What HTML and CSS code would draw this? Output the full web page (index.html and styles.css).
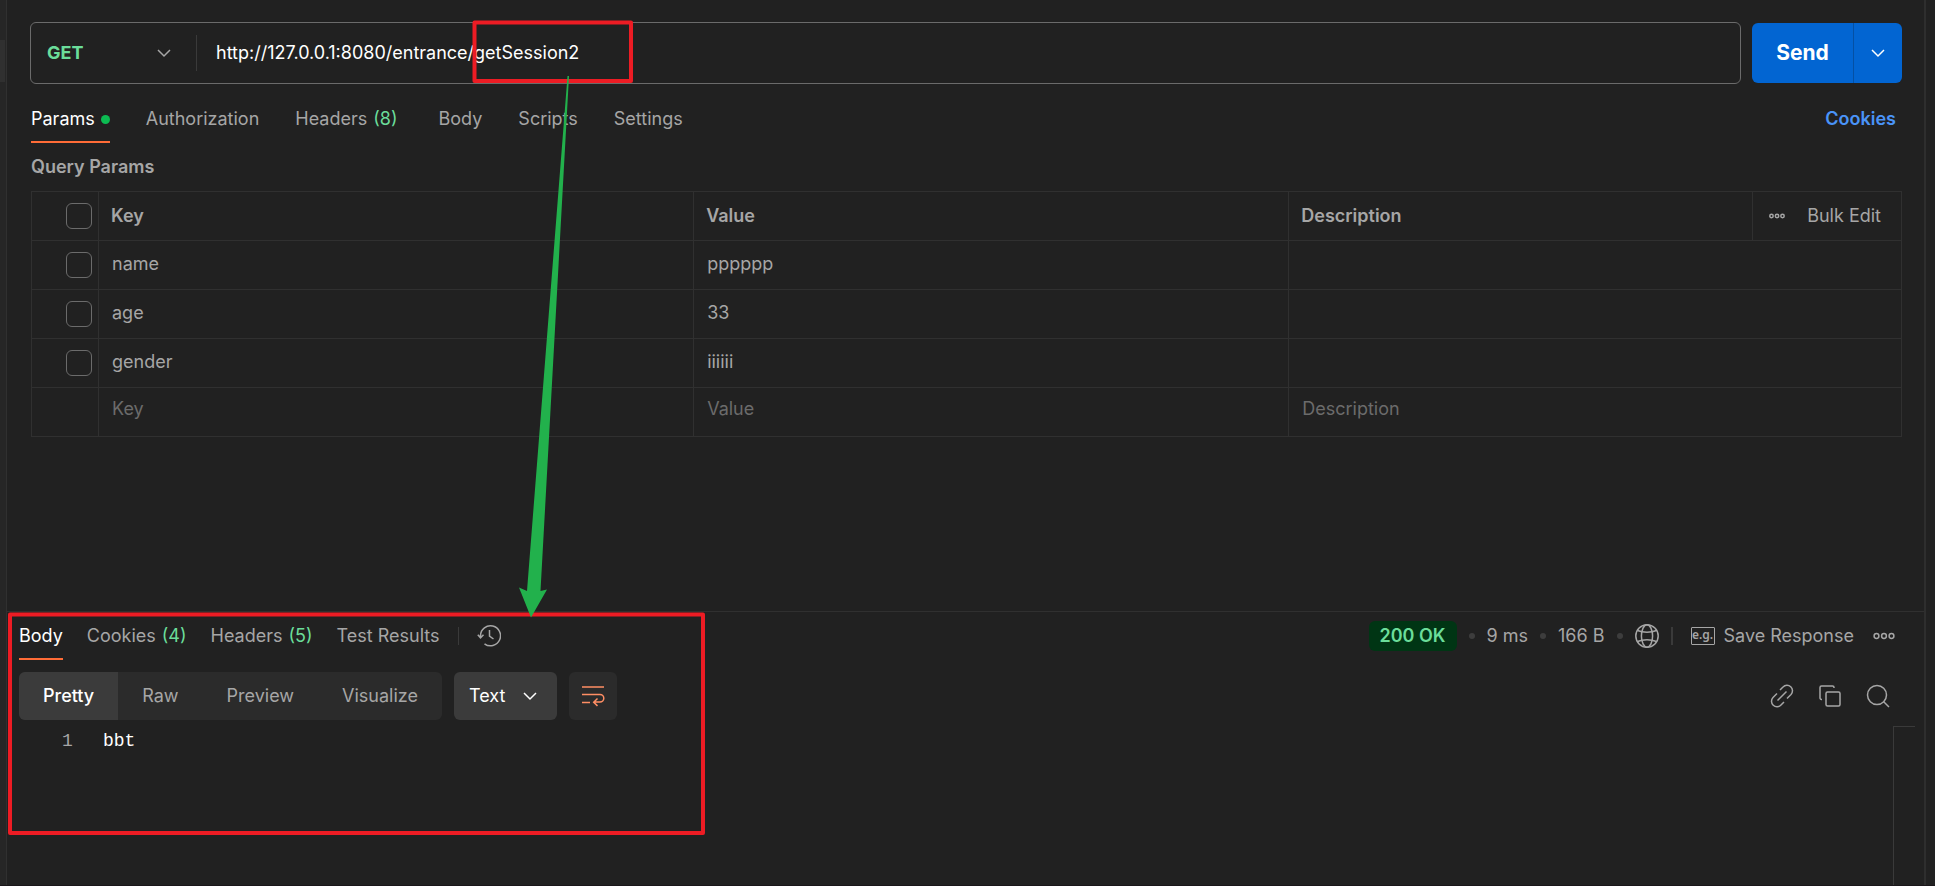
FILE: index.html
```html
<!DOCTYPE html>
<html lang="en">
<head>
<meta charset="utf-8">
<title>GET getSession2</title>
<link rel="stylesheet" href="styles.css">
</head>
<body>
<div class="app">
  <aside class="rail"><span class="rail-item"></span></aside>
  <main class="main">
    <section class="request">
      <form class="url-row">
        <div class="url-box">
          <button type="button" class="method">GET
            <svg width="14" height="9" viewBox="0 0 14 9"><path d="M1 1l6 6 6-6"/></svg>
          </button>
          <input class="url" type="text" aria-label="Request URL" value="http://127.0.0.1:8080/entrance/getSession2">
        </div>
        <div class="send-group">
          <button type="button" class="send">Send</button>
          <button type="button" class="send-more" aria-label="Send options">
            <svg width="14" height="9" viewBox="0 0 14 9"><path d="M1 1l6 6 6-6"/></svg>
          </button>
        </div>
      </form>
      <nav class="tabs">
        <a href="#params" class="tab active">Params<i class="live"></i></a>
        <a href="#auth" class="tab">Authorization</a>
        <a href="#headers" class="tab headers">Headers <span class="count">(8)</span></a>
        <a href="#body" class="tab">Body</a>
        <a href="#scripts" class="tab">Scripts</a>
        <a href="#settings" class="tab">Settings</a>
        <a href="#cookies" class="cookies">Cookies</a>
      </nav>
      <h2 class="title">Query Params</h2>
      <table class="params">
        <colgroup><col class="c-check"><col class="c-key"><col class="c-value"><col class="c-desc"><col class="c-tools"></colgroup>
        <thead>
          <tr>
            <th class="check"><input type="checkbox" aria-label="Select all"></th>
            <th>Key</th><th>Value</th><th>Description</th>
            <th class="tools"><div class="tools-row">
              <button type="button" class="icon" aria-label="More options"><svg width="16" height="6" viewBox="0 0 16 6"><circle cx="2.5" cy="3" r="1.7"/><circle cx="8" cy="3" r="1.7"/><circle cx="13.5" cy="3" r="1.7"/></svg></button>
              <button type="button" class="bulk">Bulk Edit</button>
            </div></th>
          </tr>
        </thead>
        <tbody>
          <tr><td class="check"><input type="checkbox" aria-label="name"></td><td>name</td><td>pppppp</td><td colspan="2"></td></tr>
          <tr><td class="check"><input type="checkbox" aria-label="age"></td><td>age</td><td>33</td><td colspan="2"></td></tr>
          <tr><td class="check"><input type="checkbox" aria-label="gender"></td><td>gender</td><td>iiiiii</td><td colspan="2"></td></tr>
          <tr class="blank"><td class="check"></td>
            <td><input type="text" placeholder="Key" aria-label="Key"></td>
            <td><input type="text" placeholder="Value" aria-label="Value"></td>
            <td colspan="2"><input type="text" placeholder="Description" aria-label="Description"></td></tr>
        </tbody>
      </table>
    </section>
    <section class="response">
      <div class="response-head">
        <nav class="response-tabs">
          <a href="#r-body" class="tab active">Body</a>
          <a href="#r-cookies" class="tab">Cookies <span class="count">(4)</span></a>
          <a href="#r-headers" class="tab">Headers <span class="count">(5)</span></a>
          <a href="#r-tests" class="tab">Test Results</a>
        </nav>
        <button type="button" class="history" aria-label="History">
          <svg width="24" height="22" viewBox="0 0 24 22"><path d="M3.500 13V10.500A10 10 0 1 1 7.500 18.800M.8 9.800l2.700 3 3-3M12.500 5v6.200l4 2.800"/></svg>
        </button>
        <div class="status">
          <span class="code">200 OK</span><i class="dot"></i><span>9 ms</span><i class="dot"></i><span>166 B</span><i class="dot"></i>
          <button type="button" class="globe" aria-label="Network"><svg width="24" height="24" viewBox="0 0 24 24"><circle cx="12" cy="12" r="11.200"/><ellipse cx="12" cy="12" rx="5.600" ry="11.200"/><path d="M2.500 6.500C8 8.800 16 8.800 21.500 6.500M2.500 17.500C8 15.200 16 15.200 21.500 17.500"/></svg></button>
          <button type="button" class="save"><span class="eg">e.g.</span>Save Response</button>
          <button type="button" aria-label="More actions"><svg width="22" height="8" viewBox="0 0 22 8"><circle cx="3.500" cy="4" r="2.400"/><circle cx="11" cy="4" r="2.400"/><circle cx="18.500" cy="4" r="2.400"/></svg></button>
        </div>
      </div>
      <div class="view-bar">
        <div class="segments">
          <button type="button" class="active">Pretty</button><button type="button">Raw</button><button type="button">Preview</button><button type="button">Visualize</button>
        </div>
        <button type="button" class="format">Text
          <svg width="14" height="9" viewBox="0 0 14 9"><path d="M1 1l6 6 6-6"/></svg>
        </button>
        <button type="button" class="wrap" aria-label="Wrap lines">
          <svg width="24" height="22" viewBox="0 0 24 22"><path d="M1 2h22M1 9.500h18a3.800 3.800 0 0 1 0 7.600h-6M1 17.500h8M16.500 13.500l-3.800 3.700 3.800 3.700"/></svg>
        </button>
        <div class="view-tools">
          <button type="button" aria-label="Copy link"><svg width="24" height="24" viewBox="0 0 24 24"><path d="M10 6l3-3a5.300 5.300 0 0 1 8 7.500l-4 4M14 18l-3 3a5.300 5.300 0 0 1-8-7.500l4-4M7.500 16.500l9-9"/></svg></button>
          <button type="button" aria-label="Copy"><svg width="24" height="24" viewBox="0 0 24 24"><rect x="8" y="8" width="14" height="14" rx="1.500"/><path d="M4 15.500H3.500A1.500 1.500 0 0 1 2 14V3.500A1.500 1.500 0 0 1 3.500 2H14.500A1.500 1.500 0 0 1 16 3.500V4"/></svg></button>
          <button type="button" aria-label="Search"><svg width="24" height="24" viewBox="0 0 24 24"><circle cx="11" cy="11" r="9.500"/><path d="M17.500 17.500l5.500 5.500"/></svg></button>
        </div>
      </div>
      <div class="editor">
        <pre class="source"><span class="line-no">1</span>bbt</pre>
        <div class="minimap"></div>
      </div>
    </section>
  </main>
  <aside class="gutter"></aside>
</div>
<svg class="markup" width="720" height="850" viewBox="0 0 720 850" aria-hidden="true">
  <rect x="474.500" y="22.500" width="156.500" height="58.500"/>
  <rect x="10" y="614.500" width="693" height="218.500"/>
  <path d="M567.500 76h1.500L540.500 591 547 589.500 531 617.500 519 587.500 527 591Z"/>
</svg>
</body>
</html>
```
FILE: styles.css
```css
* { box-sizing: border-box; }
body {
  margin: 0;
  background: #212121;
  color: #a6a6a6;
  font: 18px/24px Inter, "Liberation Sans", sans-serif;
}
button, input { font: inherit; color: inherit; background: none; border: 0; margin: 0; padding: 0; }
a { color: inherit; text-decoration: none; }
svg { display: block; fill: none; stroke: currentColor; stroke-width: 1.5; }

.app { display: flex; min-height: 100vh; border-bottom: 1px solid #1a161a; }
.rail { width: 7px; padding-top: 40px; background: #262626; border-right: 1px solid #303030; }
.rail-item { display: block; width: 5px; height: 42px; background: #303030; }
.gutter { width: 11px; border-left: 2px solid #2e2e2e; }
.main { flex: 1; min-width: 0; display: flex; flex-direction: column; }

.request { flex: 0 0 611px; padding: 22px 22px 0 24px; }
.url-row { display: flex; align-items: center; gap: 11px; margin-left: -1px; }
.url-box { flex: 1; display: flex; align-items: center; height: 62px; border: 1px solid #6b6b6b; border-radius: 6px; }
.method { display: flex; align-items: center; justify-content: space-between; width: 166px; height: 36px; padding: 0 25px 0 16px; border-right: 1px solid #3a3a3a; color: #6bdd9a; font-weight: 700; }
.method svg { color: #a6a6a6; }
.url { flex: 1; padding-left: 19px; color: #fff; }
.send-group { display: flex; height: 60px; border-radius: 6px; background: #0265d2; color: #fff; overflow: hidden; }
.send { width: 101px; font-size: 21px; font-weight: 700; }
.send-more { width: 49px; border-left: 1px solid #0450a4; display: grid; place-items: center; }

.tabs { display: flex; gap: 36px; padding-top: 19px; }
.tab { display: flex; align-items: center; gap: 6px; height: 40px; padding-bottom: 6px; border-bottom: 2px solid transparent; white-space: nowrap; }
.tab.active { color: #fff; border-color: #ff6c37; }
.tab.headers { padding-right: 5px; }
.tab .count { color: #6bdd9a; }
.live { width: 9px; height: 9px; border-radius: 50%; background: #0cbb52; }
.cookies { margin: 4px 6px 0 auto; color: #4a94f8; font-weight: 600; }

.title { margin: 12px 0; font-size: 18px; font-weight: 600; }
.params { width: 100%; table-layout: fixed; border-collapse: collapse; }
.c-check { width: 67px; }
.c-tools { width: 149px; }
.c-desc { width: 24.8%; }
.params th, .params td { height: 49px; padding: 0 12px; border: 1px solid #303030; text-align: left; font-weight: 600; }
.params td { padding: 0 13px 3px; font-weight: 400; }
.params .check { padding: 0 6px 0 0; }
.params .check input { appearance: none; display: block; width: 26px; height: 26px; margin-left: auto; border: 1px solid #6b6b6b; border-radius: 6px; }
.params .tools { padding: 0 20px 0 16px; }
.tools-row { display: flex; align-items: center; justify-content: space-between; }
.bulk { font-weight: 400; }
.blank input { width: 100%; display: block; height: 24px; }
.params .blank td { padding-bottom: 6px; }
.blank input::placeholder { color: #6b6b6b; opacity: 1; }

.response { flex: 1; display: flex; flex-direction: column; border-top: 1px solid #303030; }
.response-head { display: flex; align-items: flex-start; padding: 8px 29px 0 12px; }
.response-tabs { display: flex; gap: 24px; padding-right: 18px; }
.history { display: flex; align-items: center; height: 18px; margin-top: 7px; padding-left: 18px; border-left: 1px solid #3a3a3a; }
.status { flex: 1; display: flex; align-items: center; justify-content: flex-end; height: 32px; white-space: nowrap; }
.code { padding: 3px 11px; margin-right: 12px; border-radius: 6px; background: #003514; color: #6bdd9a; font-weight: 600; }
.dot { width: 6px; height: 6px; border-radius: 50%; background: #3d3d3d; }
.status .dot + span { margin: 0 12px; }
.globe { margin-left: 12px; }
.save { display: flex; align-items: center; gap: 9px; margin: 0 19px 0 12px; border-left: 2px solid #3a3a3a; padding-left: 18px; height: 18px; }
.eg { width: 24px; height: 18px; border: 1px solid currentColor; border-radius: 1px; font: 600 12px/14px "Noto Sans", sans-serif; text-align: center; }

.view-bar { display: flex; align-items: center; gap: 12px; padding: 12px 34px 0 12px; }
.segments { display: flex; border-radius: 6px; overflow: hidden; background: #2b2b2b; }
.segments button { height: 48px; padding: 0 24px; }
.segments .active { background: #3b3b3b; color: #fff; font-weight: 500; }
.format { display: flex; align-items: center; justify-content: space-between; width: 103px; height: 48px; padding: 0 20px 0 15px; border-radius: 6px; background: #3b3b3b; color: #fff; }
.wrap { display: grid; place-items: center; width: 48px; height: 48px; border-radius: 6px; background: #2b2b2b; color: #ff8e64; }
.view-tools { display: flex; gap: 24px; margin-left: auto; }

.editor { flex: 1; display: flex; justify-content: space-between; padding: 6px 9px 0 0; }
.source { margin: 0; padding: 3px 0 0 55px; color: #fff; font: 18px/24px "Liberation Mono", monospace; }
.line-no { display: inline-block; width: 41px; color: #a6a6a6; }
.minimap { width: 22px; border: solid #3a3a3a; border-width: 1px 0 0 1px; }

/* Hand-drawn callouts lie above the whole page */
.markup { position: absolute; top: 0; left: 0; pointer-events: none; }
.markup rect { stroke: #ed1c24; stroke-width: 4; stroke-linejoin: round; }
.markup path { fill: #22b14c; stroke: none; }
```
